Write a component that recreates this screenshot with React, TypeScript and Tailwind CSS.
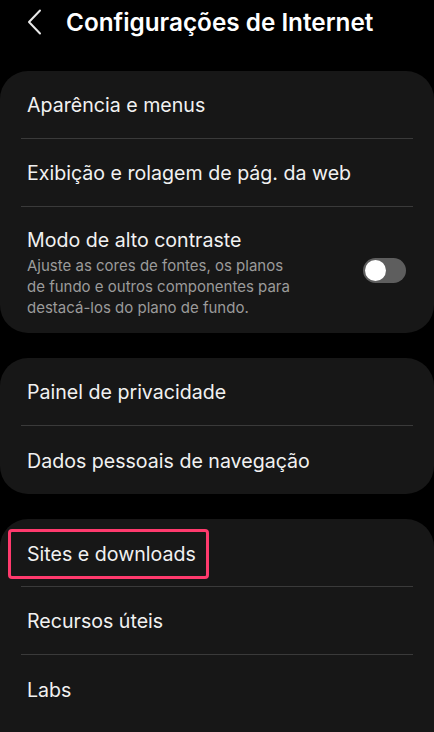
const font = { fontFamily: "Inter, 'Noto Sans', sans-serif" };

function Row({ label, divider = true }: { label: string; divider?: boolean }) {
  return (
    <div className="flex h-[68px] flex-col">
      <div className="flex flex-1 items-center px-[27px] pt-[3px] text-[19.6px] text-[#f1f1f1]">{label}</div>
      {divider && <div className="mx-[21px] h-px bg-[#3a3a3a]" />}
    </div>
  );
}

export default function App() {
  return (
    <div className="h-[732px] w-[434px] overflow-hidden bg-black" style={font}>
      <header className="flex h-[71px] items-start gap-[24px] pl-[27px] pt-[8px]">
        <svg width="15" height="26" viewBox="0 0 15 26" className="mt-[1px]">
          <polyline points="13,1.5 2,13 13,24.5" fill="none" stroke="#e8e8e8" strokeWidth="2" strokeLinecap="round" strokeLinejoin="round" />
        </svg>
        <h1 className="text-[24.3px] font-semibold leading-[28px] text-white">Configurações de Internet</h1>
      </header>

      <section className="rounded-[28px] bg-[#171717]">
        <Row label="Aparência e menus" />
        <Row label="Exibição e rolagem de pág. da web" />
        <div className="flex h-[126px] items-start justify-between px-[27px] pt-[20px]">
          <div>
            <p className="text-[19.6px] leading-[26px] text-[#f1f1f1]">Modo de alto contraste</p>
            <p className="mt-[2px] w-[268px] text-[15px] leading-[21px] text-[#9b9b9b]">
              Ajuste as cores de fontes, os planos de fundo e outros componentes para destacá-los do plano de fundo.
            </p>
          </div>
          <div className="mr-[1px] mt-[31px] flex h-[25px] w-[43px] shrink-0 items-center rounded-full bg-[#5e5e5e] px-[2px]">
            <span className="size-[21px] rounded-full bg-white" />
          </div>
        </div>
      </section>

      <section className="mt-[25px] rounded-[28px] bg-[#171717]">
        <Row label="Painel de privacidade" />
        <Row label="Dados pessoais de navegação" divider={false} />
      </section>

      <section className="mt-[25px] rounded-t-[28px] bg-[#171717] pb-[40px]">
        <div className="flex h-[68px] flex-col">
          <div className="flex flex-1 items-center px-[8px] pt-[3px]">
            <span className="rounded-[4px] border-[3px] border-[#ff3a6d] py-[10px] pl-[16px] pr-[10px] text-[19.6px] leading-[24px] text-[#f1f1f1]">
              Sites e downloads
            </span>
          </div>
          <div className="mx-[21px] h-px bg-[#3a3a3a]" />
        </div>
        <Row label="Recursos úteis" />
        <Row label="Labs" divider={false} />
      </section>
    </div>
  );
}
